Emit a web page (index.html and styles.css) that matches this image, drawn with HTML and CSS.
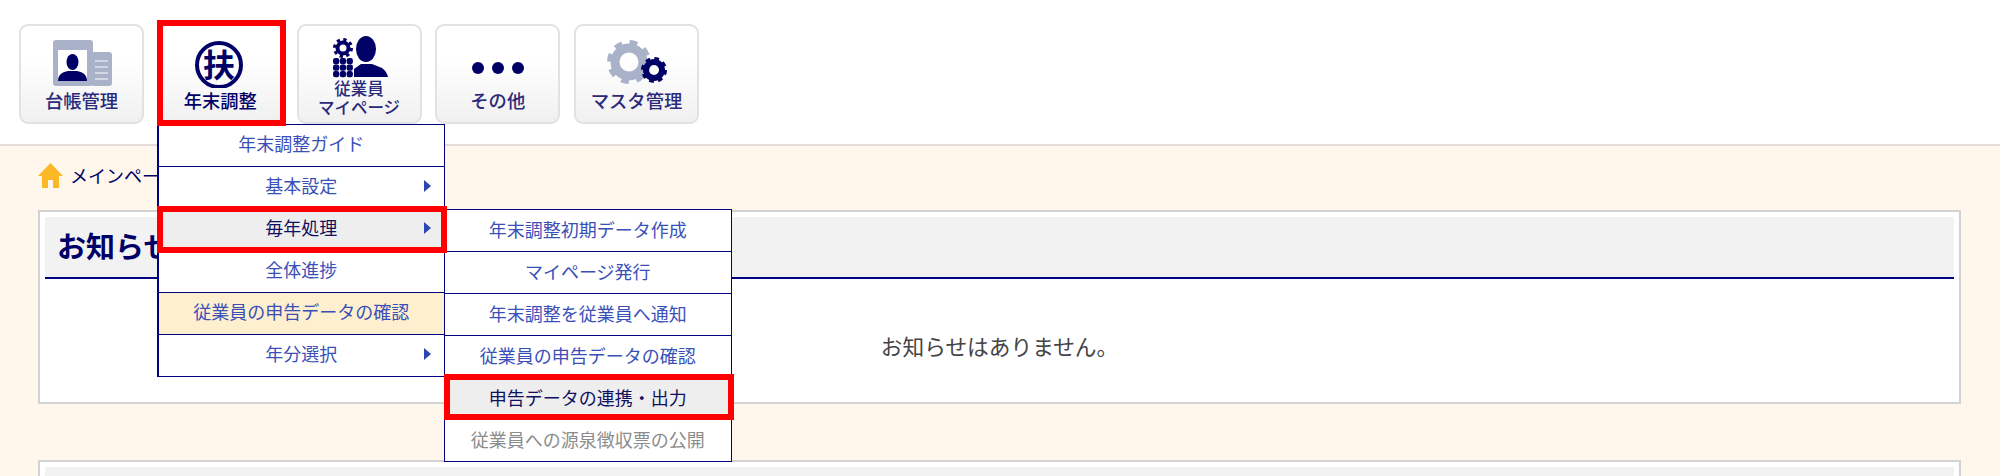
FILE: index.html
```html
<!DOCTYPE html>
<html lang="ja">
<head>
<meta charset="utf-8">
<title>年末調整</title>
<link rel="stylesheet" href="styles.css">
</head>
<body>
<header class="top">
  <nav class="nav">
    <a class="btn">
      <svg class="ico" viewBox="-1 0 60 48" width="60" height="48">
        <rect x="38" y="12" width="21" height="34" rx="3" fill="#a9b2c8"/>
        <path d="M42 21h13M42 27h13M42 33h13M42 39h13" stroke="#dfe3ec" stroke-width="1.6"/>
        <rect x="0" y="0" width="40" height="46" rx="3" fill="#a9b2c8"/>
        <rect x="5" y="10" width="29" height="31" fill="#fff"/>
        <ellipse cx="19.500" cy="22" rx="6" ry="8" fill="#000066"/>
        <path d="M5 41c0-7 5-9 10-10h9c5 1 10 3 10 10z" fill="#000066"/>
      </svg>
      <span class="lbl">台帳管理</span>
    </a>
    <div class="btn-wrap">
      <a class="btn">
        <svg class="ico" viewBox="1 0 50 48" width="50" height="48">
          <circle cx="25" cy="25" r="22" fill="none" stroke="#000066" stroke-width="4"/>
          <text x="25" y="36.500" class="fu">扶</text>
        </svg>
        <span class="lbl lbl-dark">年末調整</span>
      </a>
      <span class="mark"></span>
      <ul class="menu">
        <li class="item">年末調整ガイド</li>
        <li class="item has-sub">基本設定</li>
        <li class="item has-sub item-on">毎年処理
          <span class="mark mark-row"></span>
          <ul class="menu sub">
            <li class="item">年末調整初期データ作成</li>
            <li class="item">マイページ発行</li>
            <li class="item">年末調整を従業員へ通知</li>
            <li class="item">従業員の申告データの確認</li>
            <li class="item item-on">申告データの連携・出力<span class="mark mark-sub"></span></li>
            <li class="item item-off">従業員への源泉徴収票の公開</li>
          </ul>
        </li>
        <li class="item">全体進捗</li>
        <li class="item item-warm">従業員の申告データの確認</li>
        <li class="item has-sub">年分選択</li>
      </ul>
    </div>
    <a class="btn">
      <svg class="ico ico-over" viewBox="-4 3 60 48" width="60" height="48">
        <circle cx="10" cy="11" r="5.500" fill="none" stroke="#000066" stroke-width="4"/>
        <circle cx="10" cy="11" r="8.500" fill="none" stroke="#000066" stroke-width="3" stroke-dasharray="3.300 3.380"/>
        <g fill="#000066">
          <rect x="0" y="21" width="6.300" height="6.300" rx="2.200"/><rect x="6.800" y="21" width="6.300" height="6.300" rx="2.200"/><rect x="13.600" y="21" width="6.300" height="6.300" rx="2.200"/>
          <rect x="0" y="27.500" width="6.300" height="6.300" rx="2.200"/><rect x="6.800" y="27.500" width="6.300" height="6.300" rx="2.200"/><rect x="13.600" y="27.500" width="6.300" height="6.300" rx="2.200"/>
          <rect x="0" y="34" width="6.300" height="6.300" rx="2.200"/><rect x="6.800" y="34" width="6.300" height="6.300" rx="2.200"/><rect x="13.600" y="34" width="6.300" height="6.300" rx="2.200"/>
          <ellipse cx="33" cy="12" rx="10" ry="13"/>
          <path d="M21 40v-8l7-5h11l10 4c3 2 5 5 6 9z"/>
        </g>
      </svg>
      <span class="lbl lbl-two">従業員<br>マイページ</span>
    </a>
    <a class="btn">
      <svg class="ico" viewBox="0 0 52 48" width="52" height="48">
        <circle cx="6" cy="28" r="6" fill="#000066"/>
        <circle cx="26" cy="28" r="6" fill="#000066"/>
        <circle cx="46" cy="28" r="6" fill="#000066"/>
      </svg>
      <span class="lbl">その他</span>
    </a>
    <a class="btn">
      <svg class="ico" viewBox="0 0 60 48" width="60" height="48">
        <circle cx="22" cy="22" r="14" fill="none" stroke="#a9b2c8" stroke-width="9"/>
        <circle cx="22" cy="22" r="19" fill="none" stroke="#a9b2c8" stroke-width="6" stroke-dasharray="7.500 7.420"/>
        <circle cx="47" cy="30" r="8" fill="none" stroke="#000066" stroke-width="6"/>
        <circle cx="47" cy="30" r="11" fill="none" stroke="#000066" stroke-width="4" stroke-dasharray="4.500 4.140"/>
      </svg>
      <span class="lbl">マスタ管理</span>
    </a>
  </nav>
</header>
<main class="main">
  <div class="crumb">
    <svg class="home" viewBox="0 0 25 25" width="25" height="25">
      <path d="M12.500 0L25 13h-4v12h-6v-8h-5v8H4V13H0z" fill="#fdb827"/>
    </svg>
    <span>メインページ</span>
  </div>
  <section class="panel">
    <h2 class="head">お知らせ</h2>
    <p class="empty">お知らせはありません。</p>
  </section>
  <section class="panel panel-next">
    <div class="head"></div>
  </section>
</main>
</body>
</html>
```
FILE: styles.css
```css
* { box-sizing: border-box; }
html, body { margin: 0; height: 476px; overflow: hidden; }
body {
  background: #fff6ec;
  color: #444;
  font-family: "Noto Sans CJK JP", "Noto Sans", sans-serif;
}
.top {
  height: 146px;
  background: #fff;
  border-bottom: 2px solid #e2ddd8;
}
.nav {
  display: flex;
  gap: 13.750px;
  padding: 24px 0 0 19px;
}
.btn, .btn-wrap { width: 125px; height: 100px; }
.btn-wrap { position: relative; }
.btn {
  display: flex;
  flex-direction: column;
  align-items: center;
  border: 2px solid #e2e2e2;
  border-radius: 9px;
  background: linear-gradient(#fff 35%, #f0f0f0);
  color: #2a2a7a;
  padding-top: 14px;
  position: relative;
}
.ico { display: block; height: 48px; flex: none; }
.ico-over { overflow: visible; }
.lbl {
  font-size: 18.300px;
  line-height: 20px;
  font-weight: 500;
  margin-top: 2px;
  white-space: nowrap;
}
.lbl-dark { color: #000066; }
.lbl-two {
  font-size: 16.500px;
  line-height: 19px;
  text-align: center;
  margin-top: -9px;
}
.fu {
  font-size: 32px;
  font-weight: 700;
  text-anchor: middle;
  fill: #000066;
  font-family: "Noto Sans CJK JP", sans-serif;
}
.mark {
  position: absolute;
  left: -1px;
  right: -3px;
  top: -4px;
  bottom: -2px;
  border: 6px solid #f00;
  pointer-events: none;
  z-index: 5;
}
.mark-row { left: -2px; right: -3px; top: -3px; bottom: -3px; }
.mark-sub { left: -1px; right: -3px; top: -4px; bottom: -1px; }
.menu {
  list-style: none;
  margin: 0;
  padding: 0;
  position: absolute;
  left: -1px;
  top: 100px;
  width: 288px;
  background: #fff;
  border: 1px solid #000080;
  border-left-width: 2px;
  z-index: 3;
}
.sub {
  left: 285px;
  top: 0;
  border-left-width: 1px;
}
.item {
  position: relative;
  height: 42px;
  line-height: 37px;
  font-size: 18px;
  text-align: center;
  color: #3a50b8;
  border-bottom: 1px solid #000080;
  background: #fff;
  white-space: nowrap;
}
.sub .item { line-height: 38px; }
.item:last-child { border-bottom: 0; height: 41px; }
.item-on { background: #eee; color: #101060; }
.item-warm { background: #feefcf; }
.sub .item-off { color: #8c8c8c; }
.has-sub::before {
  content: "";
  position: absolute;
  right: 13px;
  top: 13px;
  border-left: 7px solid #2a46b0;
  border-top: 6px solid transparent;
  border-bottom: 6px solid transparent;
}
.main { padding: 0 39px 0 38px; }
.crumb {
  display: flex;
  align-items: center;
  gap: 7px;
  height: 64px;
  padding-bottom: 6px;
  font-size: 18px;
  color: #000066;
}
.home { display: block; }
.panel {
  height: 194px;
  background: #fff;
  border: 2px solid #d2d2d2;
  padding: 5px;
  text-align: center;
}
.panel-next { margin-top: 56px; height: 200px; }
.head {
  height: 62px;
  margin: 0;
  padding-left: 12px;
  background: #f2f2f2;
  border-bottom: 2px solid #000080;
  color: #000066;
  font-size: 29px;
  font-weight: 700;
  line-height: 56px;
  text-align: left;
}
.panel-next .head { border-bottom: 0; }
.empty {
  margin: 0;
  padding-top: 52px;
  font-size: 21.700px;
  line-height: 30px;
}
```
